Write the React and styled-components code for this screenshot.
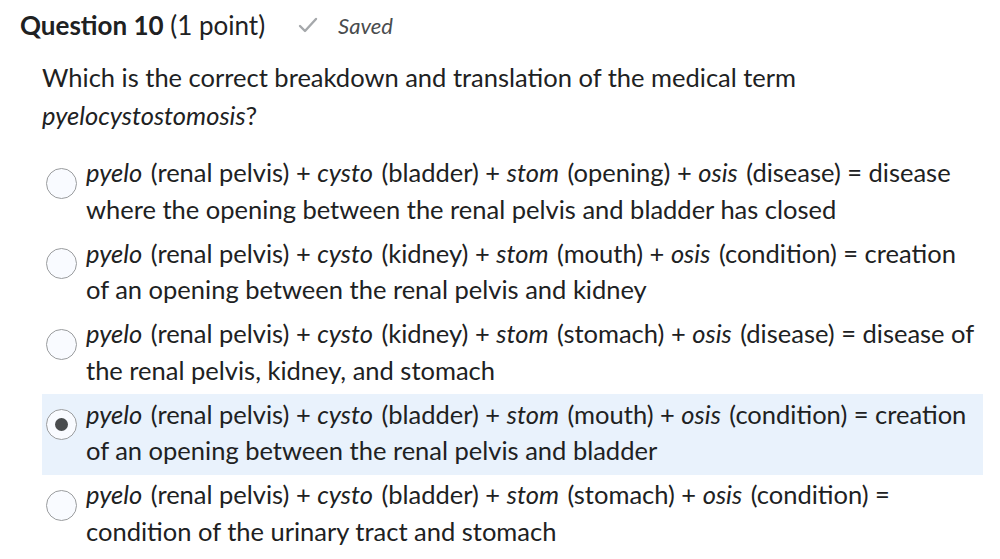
import React from "react";
import styled, { createGlobalStyle } from "styled-components";

const Global = createGlobalStyle`
  html, body { margin: 0; padding: 0; background: #fff; }
  body { font-family: Lato, "Noto Sans", sans-serif; color: #202122; }
`;

const Page = styled.div`
  padding: 6px 0 0 20px;
  width: 963px;
`;

const Header = styled.div`
  display: flex;
  align-items: center;
  height: 38px;
`;

const Title = styled.h2`
  margin: 0;
  font-size: 26px;
  font-weight: 400;
  color: #202122;
  strong { font-weight: 700; }
`;

const SavedBox = styled.div`
  display: flex;
  align-items: center;
  margin-left: 33px;
  gap: 20px;
  font-size: 22px;
  font-style: italic;
  color: #494c4e;
`;

const Body = styled.div`
  margin-left: 22px;
`;

const Prompt = styled.p`
  margin: 14px 0 18.5px;
  font-size: 25.5px;
  line-height: 38px;
`;

const Options = styled.div`
  display: flex;
  flex-direction: column;
  width: 941px;
`;

const Row = styled.label`
  display: flex;
  align-items: flex-start;
  gap: 9px;
  padding: 1.5px 4px 6px;
  min-height: 73px;
  background: ${(p) => (p.$selected ? "#e9f2fc" : "transparent")};
`;

const Radio = styled.span`
  flex: none;
  box-sizing: border-box;
  width: 31px;
  height: 31px;
  margin-top: 13.5px;
  border-radius: 50%;
  border: 1.5px solid #9a9c9e;
  background: #f9fbff;
  display: flex;
  align-items: center;
  justify-content: center;
  &::after {
    content: "";
    display: ${(p) => (p.$checked ? "block" : "none")};
    width: 13px;
    height: 13px;
    border-radius: 50%;
    background: #494c4e;
  }
`;

const OptText = styled.span`
  font-size: 25.5px;
  line-height: 36.5px;
  color: #202122;
  em { padding-right: 2px; }
`;

const Check = () => (
  <svg width="20" height="16" viewBox="0 0 20 16">
    <path d="M2 9 L7 14 L18 2" fill="none" stroke="#a5a8ab" strokeWidth="2.4" strokeLinecap="round" strokeLinejoin="round" />
  </svg>
);

const options = [
  ["bladder", "opening", "disease", "disease where the opening between the renal pelvis and bladder has closed"],
  ["kidney", "mouth", "condition", "creation of an opening between the renal pelvis and kidney"],
  ["kidney", "stomach", "disease", "disease of the renal pelvis, kidney, and stomach"],
  ["bladder", "mouth", "condition", "creation of an opening between the renal pelvis and bladder"],
  ["bladder", "stomach", "condition", "condition of the urinary tract and stomach"],
];

export default function App() {
  return (
    <>
      <Global />
      <Page>
        <Header>
          <Title>
            <strong>Question 10</strong> (1 point)
          </Title>
          <SavedBox>
            <Check />
            <span>Saved</span>
          </SavedBox>
        </Header>
        <Body>
          <Prompt>
            Which is the correct breakdown and translation of the medical term <em>pyelocystostomosis</em>?
          </Prompt>
          <Options>
            {options.map(([c, s, o, res], i) => (
              <Row key={i} $selected={i === 3}>
                <Radio $checked={i === 3} />
                <OptText>
                  <em>pyelo</em> (renal pelvis) + <em>cysto</em> ({c}) + <em>stom</em> ({s}) + <em>osis</em> ({o}) = {res}
                </OptText>
              </Row>
            ))}
          </Options>
        </Body>
      </Page>
    </>
  );
}
